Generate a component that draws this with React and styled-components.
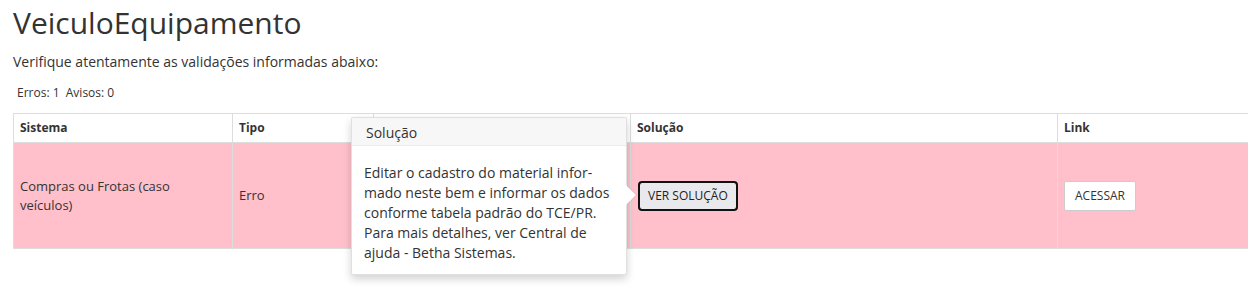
import React from "react";
import styled, { createGlobalStyle } from "styled-components";

const Global = createGlobalStyle`
  html, body { margin: 0; padding: 0; background: #fff; }
  body { font-family: "Open Sans", "Noto Sans", sans-serif; color: #333; }
`;

const Page = styled.div`
  padding: 0 0 0 13px;
  width: 1248px;
  height: 287px;
  box-sizing: border-box;
  overflow: hidden;
`;

const Title = styled.h1`
  font-size: 30px;
  font-weight: 400;
  line-height: 33px;
  margin: 6px 0 0 0;
  color: #333;
`;

const Subtitle = styled.p`
  font-size: 14px;
  line-height: 20px;
  margin: 13px 0 0 0;
`;

const Counters = styled.p`
  font-size: 12px;
  line-height: 17px;
  margin: 12px 0 0 4px;
  white-space: pre;
`;

const TableWrap = styled.div`
  position: relative;
  margin-top: 12px;
  width: 1300px;
`;

const Table = styled.table`
  border-collapse: collapse;
  width: 1300px;
  font-size: 12px;
  table-layout: fixed;
`;

const Th = styled.th`
  box-sizing: border-box;
  text-align: left;
  font-weight: 700;
  border: 1px solid #ddd;
  padding: 6px 6px;
  line-height: 16px;
  width: ${(p) => p.$w}px;
`;

const Td = styled.td`
  background: #ffc0cb;
  border: 1px solid #ddd;
  padding: 6px 10px 6px 6px;
  height: 93px;
  font-size: 13px;
  line-height: 19px;
  vertical-align: middle;
`;

const SolutionButton = styled.button`
  font-family: "Open Sans", "Noto Sans", sans-serif;
  font-size: 12px;
  color: #222;
  background: #e9e9ed;
  border: 1px solid #8f8f9d;
  border-radius: 3px;
  outline: 2px solid #111;
  outline-offset: -1px;
  padding: 5px 8px 5px 8px;
  margin-left: 2px;
  line-height: 16px;
`;

const LinkButton = styled.button`
  font-family: "Open Sans", "Noto Sans", sans-serif;
  font-size: 12px;
  color: #333;
  background: #fff;
  border: 1px solid #ccc;
  border-radius: 2px;
  padding: 6px 10px;
  line-height: 16px;
`;

const Popover = styled.div`
  position: absolute;
  left: 338px;
  top: 4px;
  width: 276px;
  box-sizing: border-box;
  background: #fff;
  border: 1px solid rgba(0, 0, 0, 0.12);
  border-radius: 2px;
  box-shadow: 0 4px 8px rgba(0, 0, 0, 0.18);
  font-size: 14px;
  z-index: 5;
`;

const PopTitle = styled.div`
  background: #f7f7f7;
  border-bottom: 1px solid #ebebeb;
  padding: 6px 14px 3px 14px;
  line-height: 18px;
`;

const PopContent = styled.div`
  padding: 17px 12px 11px 12px;
  line-height: 20px;
`;

const Arrow = styled.div`
  position: absolute;
  right: -10px;
  top: 67px;
  width: 0;
  height: 0;
  border-top: 10px solid transparent;
  border-bottom: 10px solid transparent;
  border-left: 10px solid #fff;
  filter: drop-shadow(1px 0 0 rgba(0, 0, 0, 0.08));
`;

export default function App() {
  return (
    <>
      <Global />
      <Page>
        <Title>VeiculoEquipamento</Title>
        <Subtitle>Verifique atentamente as validações informadas abaixo:</Subtitle>
        <Counters>{"Erros: 1  Avisos: 0"}</Counters>
        <TableWrap>
          <Table>
            <thead>
              <tr>
                <Th $w={219}>Sistema</Th>
                <Th $w={141}>Tipo</Th>
                <Th $w={257}>Descrição</Th>
                <Th $w={427}>Solução</Th>
                <Th $w={256}>Link</Th>
              </tr>
            </thead>
            <tbody>
              <tr>
                <Td>Compras ou Frotas (caso veículos)</Td>
                <Td>Erro</Td>
                <Td></Td>
                <Td>
                  <SolutionButton>VER SOLUÇÃO</SolutionButton>
                </Td>
                <Td>
                  <LinkButton>ACESSAR</LinkButton>
                </Td>
              </tr>
            </tbody>
          </Table>
          <Popover>
            <Arrow />
            <PopTitle>Solução</PopTitle>
            <PopContent>
              Editar o cadastro do material infor-mado neste bem e informar os dados conforme tabela padrão do TCE/PR. Para mais detalhes, ver Central de ajuda - Betha Sistemas.
            </PopContent>
          </Popover>
        </TableWrap>
      </Page>
    </>
  );
}
